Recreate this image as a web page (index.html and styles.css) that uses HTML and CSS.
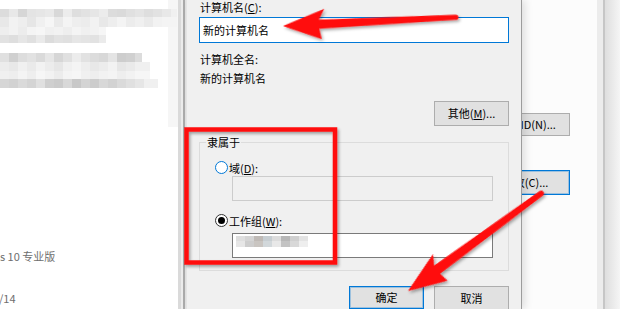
FILE: index.html
```html
<!DOCTYPE html>
<html lang="zh-CN">
<head>
  <meta charset="UTF-8">
  <meta name="viewport" content="width=device-width, initial-scale=1.0">
  <title>计算机名/域更改</title>
  <link rel="stylesheet" href="styles.css">
</head>
<body>
  <div class="screen">
    <!-- 背后的资源管理器（已打码） -->
    <div class="explorer">
      <div class="row ra"></div>
      <div class="row rb"></div>
      <div class="row rc"></div>
      <div class="row rd"></div>
      <div class="row re"></div>
      <div class="row rf"></div>
      <div class="row rg"></div>
      <div class="row rh"></div>
      <div class="info os">s 10 专业版</div>
      <div class="info date">/14</div>
    </div>
    <div class="edge"></div>

    <!-- 前面的对话框 -->
    <div class="dialog">
      <div class="lbl">计算机名(<u>C</u>):</div>
      <div class="field name">新的计算机名</div>
      <div class="lbl full">计算机全名:</div>
      <div class="lbl value">新的计算机名</div>
      <div class="more-row">
        <button class="btn">其他(<u>M</u>)...</button>
      </div>

      <fieldset class="group">
        <legend>隶属于</legend>
        <div class="opt"><span class="radio hover"></span>域(<u>D</u>):</div>
        <div class="field off"></div>
        <div class="opt second"><span class="radio on"></span>工作组(<u>W</u>):</div>
        <div class="field wg"><span class="mosaic"></span></div>
      </fieldset>

      <div class="actions">
        <button class="btn primary">确定</button>
        <button class="btn">取消</button>
      </div>
    </div>

    <!-- 系统属性窗口露出的部分 -->
    <div class="behind">
      <button class="btn back">网络 ID(N)...</button>
      <button class="btn back focus">更改(C)...</button>
    </div>
    <div class="strip"></div>
    <div class="rest"></div>

    <!-- 红色标注 -->
    <svg class="marks" width="620" height="309" viewBox="0 0 620 309">
      <defs>
        <filter id="shadow" x="-20%" y="-20%" width="140%" height="140%">
          <feDropShadow dx="1.5" dy="2" stdDeviation="1.5" flood-color="#000" flood-opacity=".35"/>
        </filter>
      </defs>
      <g class="mark" filter="url(#shadow)">
        <rect x="186.5" y="129.5" width="148.5" height="133" fill="none" stroke-width="4.5"/>
        <path transform="translate(283 26) rotate(-2.9)" d="M0 0 L42 -15 L36 -4.5 L173 -2.6 A2.6 2.6 0 0 1 173 2.6 L36 4.5 L38 15 Z"/>
        <path transform="translate(408 291) rotate(-36.25)" d="M0 0 L42 -15 L36 -5 L165 -2.8 A2.8 2.8 0 0 1 165 2.8 L36 5 L38 15 Z"/>
      </g>
    </svg>
  </div>
</body>
</html>
```

FILE: styles.css
```css
body {
  margin: 0;
  font-family: "Noto Sans CJK SC", "Microsoft YaHei", sans-serif;
  font-size: 11px;
  color: #000;
}

.screen {
  position: relative;
  display: flex;
  width: 620px;
  height: 309px;
  overflow: hidden;
  background: #fff;
}

/* 左边打码的资源管理器 */
.explorer {
  width: 178px;
  flex: none;
  padding-top: 9px;
  box-sizing: border-box;
  background: #fff linear-gradient(90deg, transparent 168px, #f6f6f6 168px) no-repeat 0 0 / 178px 127px;
}

.row { height: 8px; }

.ra {
  width: 177px;
  background: linear-gradient(90deg, #dcdcdc 0 9px, #e8e8e8 0 18px, #d6d6d6 0 27px, #e4e4e4 0 36px, #e6e6e6 0 45px,
    #e9e9e9 0 54px, #d8d8d8 0 63px, #ececec 0 72px, #dedede 0 81px, #e2e2e2 0 90px, #e6e6e6 0 99px, #ececec 0 108px,
    #dcdcdc 0 117px, #dadada 0 126px, #e0e0e0 0 135px, #e4e4e4 0 144px, #dedede 0 153px, #e2e2e2 0 162px, #e8e8e8 0 171px, #f0f0f0 0);
}
.rb {
  height: 10px;
  width: 177px;
  background: linear-gradient(90deg, #e8e8e8 0 9px, #f2f2f2 0 18px, #eeeeee 0 27px, #e6e6e6 0 36px, #f0f0f0 0 45px,
    #f6f6f6 0 54px, #eaeaea 0 63px, #f4f4f4 0 72px, #eeeeee 0 81px, #ececec 0 90px, #f2f2f2 0 99px, #e8e8e8 0 108px,
    #eeeeee 0 117px, #f4f4f4 0 126px, #ececec 0 135px, #f0f0f0 0 144px, #eaeaea 0 153px, #f2f2f2 0 162px, #f4f4f4 0);
}
.rc {
  width: 106px;
  background: linear-gradient(90deg, #eeeeee 0 9px, #f2f2f2 0 18px, #ececec 0 27px, #f4f4f4 0 36px, #f6f6f6 0 45px,
    #f0f0f0 0 54px, #f2f2f2 0 63px, #eeeeee 0 72px, #f4f4f4 0 81px, #f0f0f0 0 90px, #f2f2f2 0 99px, #f6f6f6 0);
}
.rd {
  width: 106px;
  background: linear-gradient(90deg, #e2e2e2 0 9px, #dedede 0 18px, #e6e6e6 0 27px, #e0e0e0 0 36px, #eaeaea 0 45px,
    #dcdcdc 0 54px, #e2e2e2 0 63px, #e0e0e0 0 72px, #e6e6e6 0 81px, #e4e4e4 0 90px, #e2e2e2 0 99px, #ebebeb 0);
}
.re {
  height: 9px;
  width: 142px;
  margin-top: 10px;
  background: linear-gradient(90deg, #e0e0e0 0 9px, #d0d0d0 0 18px, #dddddd 0 27px, #e2e2e2 0 36px, #dadada 0 45px,
    #e6e6e6 0 54px, #d6d6d6 0 63px, #e0e0e0 0 72px, #ececec 0 81px, #e2e2e2 0 90px, #dcdcdc 0 99px, #d8d8d8 0 108px,
    #e4e4e4 0 117px, #cdcdcd 0 126px, #d0d0d0 0 135px, #dcdcdc 0);
}
.rf {
  height: 9px;
  width: 150px;
  background: linear-gradient(90deg, #ececec 0 9px, #e8e8e8 0 18px, #f0f0f0 0 27px, #eaeaea 0 36px, #f2f2f2 0 45px,
    #ececec 0 54px, #e6e6e6 0 63px, #f0f0f0 0 72px, #f4f4f4 0 81px, #eeeeee 0 90px, #e8e8e8 0 99px, #ececec 0 108px,
    #f2f2f2 0 117px, #e6e6e6 0 126px, #eaeaea 0 135px, #f0f0f0 0);
}
.rg {
  width: 150px;
  background: linear-gradient(90deg, #f0f0f0 0 9px, #eeeeee 0 18px, #f4f4f4 0 27px, #eeeeee 0 36px, #f6f6f6 0 45px,
    #f2f2f2 0 54px, #ececec 0 63px, #f4f4f4 0 72px, #f6f6f6 0 81px, #f0f0f0 0 90px, #eeeeee 0 99px, #f2f2f2 0 108px,
    #f4f4f4 0 117px, #eeeeee 0 126px, #f2f2f2 0 135px, #f6f6f6 0);
}
.rh {
  height: 9px;
  width: 158px;
  background: linear-gradient(90deg, #d6d6d6 0 9px, #d2d2d2 0 18px, #dadada 0 27px, #d4d4d4 0 36px, #e0e0e0 0 45px,
    #cfcfcf 0 54px, #cbcbcb 0 63px, #d8d8d8 0 72px, #c8c8c8 0 81px, #d4d4d4 0 90px, #cccccc 0 99px, #d8d8d8 0 108px,
    #d2d2d2 0 117px, #dadada 0 126px, #e0e0e0 0 135px, #e6e6e6 0 144px, #f0f0f0 0);
}

.info {
  color: #6e6e6e;
  line-height: 14px;
  white-space: nowrap;
}
.os { margin-top: 161px; }
.date { margin-top: 28px; margin-left: -1px; }

.edge {
  width: 8px;
  flex: none;
  background: linear-gradient(90deg, #dadada 0 3px, #ececec 0 5px, #acacac 0 7px, #e4e4e4 0);
}

/* 对话框 */
.dialog {
  position: relative;
  z-index: 1;
  width: 336px;
  flex: none;
  box-sizing: border-box;
  padding: 0 12px;
  background: #f0f0f0;
  border-left: 1px solid #e4e4e4;
  border-right: 1px solid #9c9c9c;
  box-shadow: 3px 0 8px rgba(0, 0, 0, 0.12);
}

.lbl {
  padding-left: 1px;
  line-height: 15px;
  white-space: nowrap;
}
.full { margin-top: 9px; }
.value { margin-top: 4px; }

.field {
  box-sizing: border-box;
  height: 25px;
  border: 1px solid #7a7a7a;
  background: #fff;
}
.field.name {
  height: 26px;
  margin-top: 2px;
  padding-left: 3px;
  line-height: 24px;
  border-color: #0078d7;
}
.field.off {
  width: 261px;
  margin: 1px 0 0 32px;
  border-color: #cccccc;
  background: #f0f0f0;
}
.field.wg {
  width: 261px;
  margin: 5px 0 0 32px;
}

.mosaic {
  display: block;
  width: 72px;
  height: 11px;
  margin: 2px 0 0 3px;
  background:
    linear-gradient(90deg, #dedede 0 9px, #d4d4d4 0 18px, #bfbab6 0 27px, #c7ced2 0 36px, #dcdcdc 0 45px,
      #b7b7b7 0 54px, #cfcfcf 0 63px, #e3e3e3 0) no-repeat 0 0 / 72px 5px,
    linear-gradient(90deg, #e6e6e6 0 9px, #cdcdcd 0 18px, #c9c5c1 0 27px, #d2d8db 0 36px, #e8e8e8 0 45px,
      #c3c3c3 0 54px, #d8d8d8 0 63px, #eeeeee 0) no-repeat 0 5px / 72px 6px;
}

.btn {
  box-sizing: border-box;
  width: 75px;
  height: 25px;
  padding: 0;
  border: 1px solid #adadad;
  background: #e1e1e1;
  font: inherit;
  color: #000;
  line-height: 21px;
  white-space: nowrap;
}
.btn.primary {
  height: 23px;
  border-color: #0078d7;
  box-shadow: inset 0 0 0 1px rgba(0, 120, 215, 0.3);
}

.more-row {
  display: flex;
  justify-content: flex-end;
  margin-top: 15px;
}

.group {
  margin: 9px 0 0;
  padding: 0 0 12px;
  min-width: 0;
  border: 1px solid #dcdcdc;
}
.group legend {
  margin-left: 6px;
  padding: 0 1px;
  line-height: 15px;
}

.opt {
  display: flex;
  align-items: center;
  height: 15px;
  margin-top: 10px;
  padding-left: 15px;
  white-space: nowrap;
}
.opt.second { margin-top: 12px; }

.radio {
  position: relative;
  box-sizing: border-box;
  width: 13px;
  height: 13px;
  margin-right: 1px;
  border: 1px solid #333;
  border-radius: 50%;
  background: #fff;
}
.radio.hover { border-color: #0078d7; }
.radio.on::after {
  content: '';
  position: absolute;
  left: 2px;
  top: 2px;
  width: 7px;
  height: 7px;
  border-radius: 50%;
  background: #000;
}

.actions {
  display: flex;
  justify-content: flex-end;
  gap: 10px;
  margin-top: 15px;
}

/* 后面的系统属性窗口 */
.behind {
  width: 75px;
  flex: none;
  display: flex;
  flex-direction: column;
  overflow: hidden;
  background: #fcfcfc;
}
.btn.back {
  flex: none;
  height: 23px;
  margin: 113px 0 0 -27px;
  padding-right: 14px;
}
.btn.focus {
  height: 25px;
  margin-top: 34px;
  border-color: #0078d7;
  box-shadow: inset 0 0 0 1px rgba(0, 120, 215, 0.3);
}

.strip {
  width: 8px;
  flex: none;
  background: linear-gradient(90deg, #ececec 0 6px, #c6c6c6 0);
}
.rest {
  flex: 1;
  background: linear-gradient(90deg, #dedede, #f5f5f5);
}

/* 标注层 */
.marks {
  position: absolute;
  z-index: 2;
  left: 0;
  top: 0;
  pointer-events: none;
}
.mark rect { stroke: #ff0a0a; }
.mark path { fill: #ff0a0a; }
```
